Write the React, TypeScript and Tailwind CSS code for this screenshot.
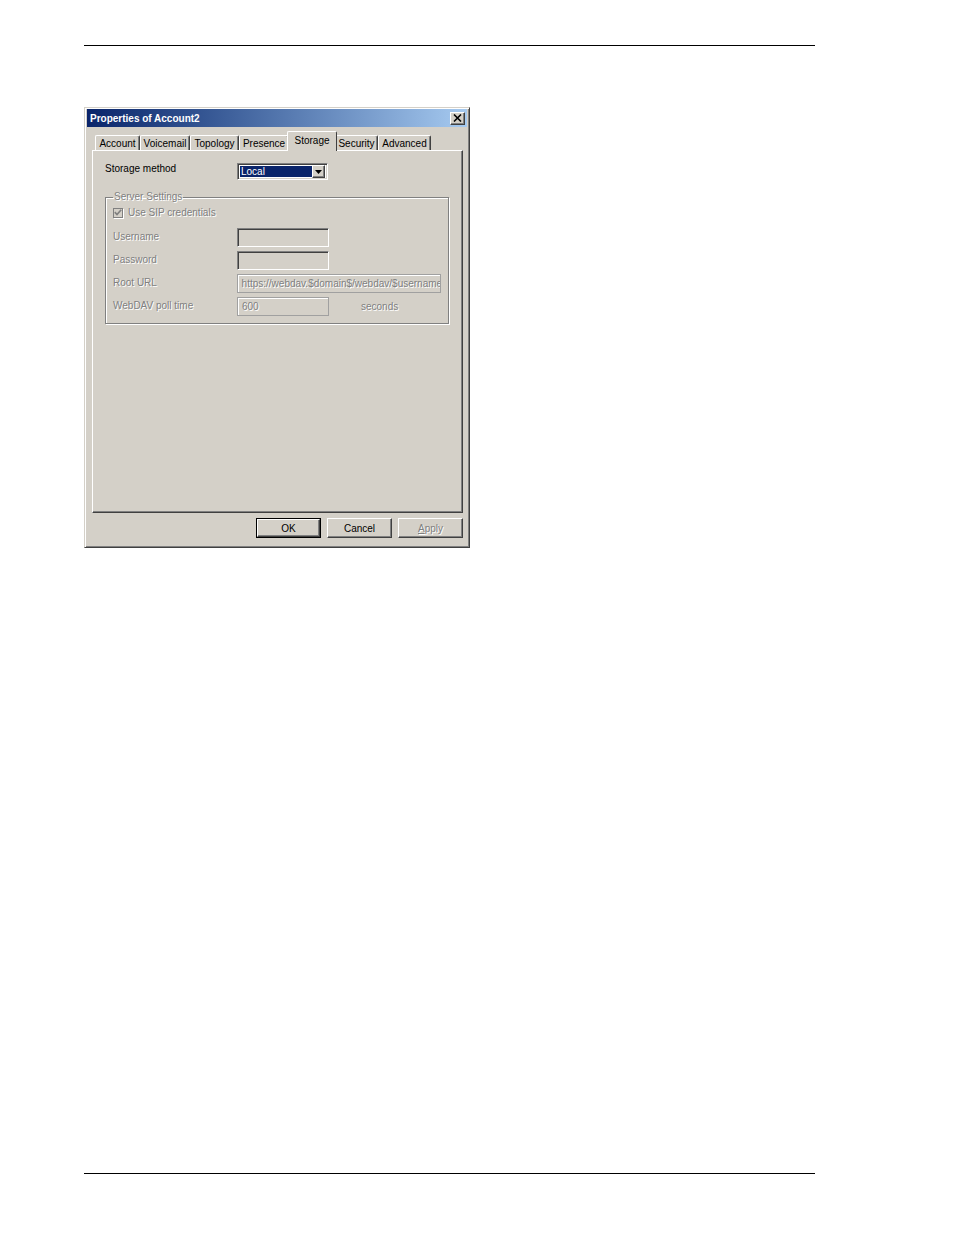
const font = "font-['Liberation_Sans',Arial,sans-serif]";

const raised =
    'border border-t-white border-l-white border-r-[#404040] border-b-[#404040] shadow-[inset_-1px_-1px_0_#808080]';
const sunken =
    'border border-t-[#808080] border-l-[#808080] border-r-white border-b-white shadow-[inset_1px_1px_0_#404040,inset_-1px_-1px_0_#d4d0c8]';
const disabledText = 'text-[#808080] [text-shadow:1px_1px_0_#ffffff]';

const tabs = [
    { name: 'Account', w: 'w-[45px]' },
    { name: 'Voicemail', w: 'w-[50px]' },
    { name: 'Topology', w: 'w-[49px]' },
    { name: 'Presence', w: 'w-[50px]' },
    { name: 'Storage', w: 'w-[44px]', active: true },
    { name: 'Security', w: 'w-[43px]' },
    { name: 'Advanced', w: 'w-[53px]' },
];

const Tab = ({ name, w, active }: { name: string; w: string; active?: boolean }) => {
    if (active) {
        return (
            <div
                className={`relative z-10 -mx-[2px] -mb-[1px] h-[18px] ${w} box-content px-[2px] border-t border-l border-r border-t-white border-l-white border-r-[#404040] bg-[#d4d0c8] rounded-t-[2px] flex items-start justify-center pt-[1px] text-[10px] text-black`}
            >
                {name}
            </div>
        );
    }
    return (
        <div
            className={`h-[15px] ${w} border-t border-l border-r border-t-white border-l-white border-r-[#404040] shadow-[inset_-1px_0_0_#808080] rounded-t-[2px] flex items-center justify-center text-[10px] text-black`}
        >
            {name}
        </div>
    );
};

const Field = ({
    label,
    width,
    value,
    sunk,
    after,
}: {
    label: string;
    width: string;
    value?: string;
    sunk?: boolean;
    after?: string;
}) => (
    <div className="flex items-center h-[19px]">
        <div className={`w-[124px] -mt-[3px] text-[10px] ${disabledText}`}>{label}</div>
        <div
            className={`${width} h-[19px] ${
                sunk ? sunken : 'border border-[#a0a0a0] shadow-[inset_1px_1px_0_#ffffff]'
            } bg-[#d4d0c8] flex items-center pl-[4px] overflow-hidden whitespace-nowrap text-[10px] ${disabledText}`}
        >
            {value}
        </div>
        {after && <div className={`ml-[32px] text-[10px] ${disabledText}`}>{after}</div>}
    </div>
);

const Button = ({ label, isDefault, disabled }: { label: string; isDefault?: boolean; disabled?: boolean }) => (
    <div
        className={`w-[65px] h-[20px] flex items-center justify-center text-[10px] ${
            isDefault ? 'border border-black' : ''
        }`}
    >
        <div
            className={`w-full h-full ${raised} bg-[#d4d0c8] flex items-center justify-center ${
                disabled ? disabledText : 'text-black'
            }`}
        >
            {disabled ? <span><span className="underline">A</span>pply</span> : label}
        </div>
    </div>
);

const App = () => {
    return (
        <div className={`w-[954px] h-[1235px] bg-white flex flex-col ${font}`}>
            <div className="mt-[45px] ml-[84px] w-[731px] border-t border-black" />

            <div className="mt-[61px] ml-[84px] w-[386px] h-[441px] border border-t-[#d4d0c8] border-l-[#d4d0c8] border-r-[#404040] border-b-[#404040] shadow-[inset_1px_1px_0_#ffffff,inset_-1px_-1px_0_#808080] bg-[#d4d0c8] p-[1px] flex flex-col">
                <div className="h-[18px] mx-[1px] bg-gradient-to-r from-[#0a246a] to-[#a6caf0] flex items-center justify-between pl-[3px] pr-[2px]">
                    <span className="text-white font-bold text-[10px]">Properties of Account2</span>
                    <div className={`w-[15px] h-[13px] ${raised} bg-[#d4d0c8] flex items-center justify-center`}>
                        <svg width="9" height="8" viewBox="0 0 9 8">
                            <path d="M1 0.5 L8 7.5 M8 0.5 L1 7.5" stroke="black" strokeWidth="1.6" />
                        </svg>
                    </div>
                </div>

                <div className="mt-[5px] ml-[9px] flex items-end h-[18px]">
                    {tabs.map((t) => (
                        <Tab key={t.name} name={t.name} w={t.w} active={t.active} />
                    ))}
                </div>

                <div className="mx-[6px] w-[371px] h-[363px] border border-t-white border-l-white border-r-[#404040] border-b-[#404040] shadow-[inset_-1px_-1px_0_#808080] pl-[12px] pt-[12px] flex flex-col">
                    <div className="flex items-center h-[17px]">
                        <div className="w-[132px] -mt-[6px] text-[10px] text-black">Storage method</div>
                        <div className={`w-[91px] h-[17px] ${sunken} bg-white flex items-center p-[2px]`}>
                            <div className="flex-1 h-full bg-[#0a246a] text-white text-[10px] flex items-center pl-[1px]">
                                Local
                            </div>
                            <div className={`w-[13px] h-[13px] ${raised} bg-[#d4d0c8] flex items-center justify-center`}>
                                <svg width="7" height="4" viewBox="0 0 7 4">
                                    <path d="M0 0 H7 L3.5 4 Z" fill="black" />
                                </svg>
                            </div>
                        </div>
                    </div>

                    <fieldset className="mt-[11px] w-[344px] border border-[#808080] shadow-[1px_1px_0_#ffffff,inset_1px_1px_0_#ffffff] px-[7px] pb-[7px] pt-0 min-w-0">
                        <legend className={`px-[1px] text-[10px] leading-[12px] ${disabledText}`}>
                            Server Settings
                        </legend>
                        <div className="flex items-center h-[11px] mt-[4px]">
                            <div className="w-[10px] h-[10px] border border-[#808080] bg-[#d4d0c8] shadow-[1px_1px_0_#ffffff] flex items-center justify-center">
                                <svg width="8" height="7" viewBox="0 0 8 7">
                                    <path d="M0.8 3.2 L3 5.5 L7.2 0.8" stroke="#808080" strokeWidth="1.7" fill="none" />
                                </svg>
                            </div>
                            <span className={`ml-[5px] text-[10px] ${disabledText}`}>Use SIP credentials</span>
                        </div>
                        <div className="mt-[10px] flex flex-col gap-[4px]">
                            <Field label="Username" width="w-[92px]" sunk />
                            <Field label="Password" width="w-[92px]" sunk />
                            <Field
                                label="Root URL"
                                width="w-[205px]"
                                value="https://webdav.$domain$/webdav/$username$"
                            />
                            <Field label="WebDAV poll time" width="w-[92px]" value="600" after="seconds" />
                        </div>
                    </fieldset>
                </div>

                <div className="mt-[5px] mr-[5px] flex justify-end gap-[6px]">
                    <Button label="OK" isDefault />
                    <Button label="Cancel" />
                    <Button label="Apply" disabled />
                </div>
            </div>

            <div className="mt-auto mb-[61px] ml-[84px] w-[731px] border-t border-black" />
        </div>
    );
};

export default App;
